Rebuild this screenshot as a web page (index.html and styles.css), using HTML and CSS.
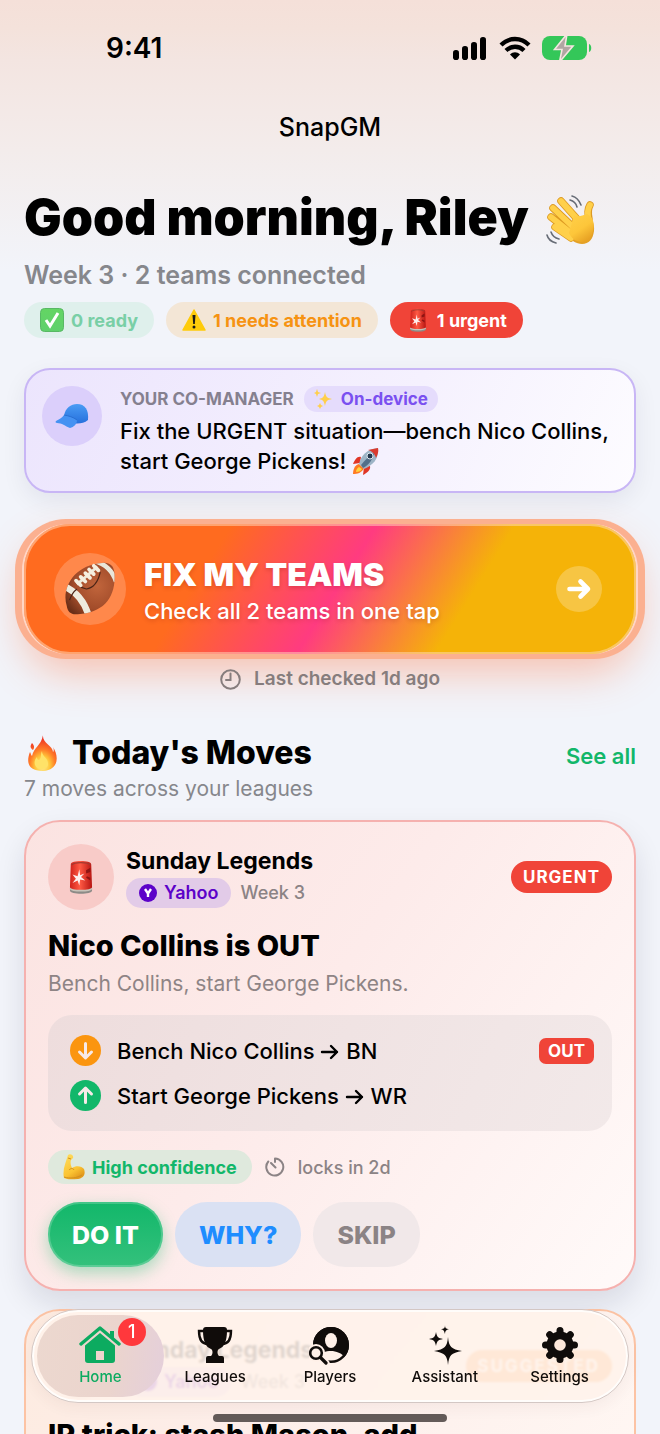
FILE: index.html
```html
<!DOCTYPE html>
<html lang="en">
<head>
<meta charset="utf-8">
<meta name="viewport" content="width=device-width, initial-scale=1">
<title>SnapGM</title>
<link rel="stylesheet" href="styles.css">
</head>
<body>
<svg class="defs" aria-hidden="true">
  <defs>
    <linearGradient id="gRed" x1="0" y1="0" x2="1" y2="0"><stop offset="0" stop-color="#d0221b"/><stop offset=".45" stop-color="#ff5a44"/><stop offset="1" stop-color="#b81512"/></linearGradient>
    <linearGradient id="gHand" x1="0" y1="0" x2=".6" y2="1"><stop offset="0" stop-color="#ffdf63"/><stop offset=".7" stop-color="#fbc332"/><stop offset="1" stop-color="#e39a1c"/></linearGradient>
    <linearGradient id="gPalm" x1="0" y1="0" x2=".6" y2="1"><stop offset="0" stop-color="#ffd04a"/><stop offset=".6" stop-color="#fdc63a"/><stop offset="1" stop-color="#e8a324"/></linearGradient>
    <linearGradient id="gGreen" x1="0" y1="0" x2="0" y2="1"><stop offset="0" stop-color="#63d563"/><stop offset="1" stop-color="#5fd06c"/></linearGradient>
    <linearGradient id="gCap" x1="0" y1="0" x2="0" y2="1"><stop offset="0" stop-color="#4a9cf5"/><stop offset="1" stop-color="#2670dc"/></linearGradient>
    <radialGradient id="gBall" cx=".62" cy=".45" r=".6"><stop offset="0" stop-color="#c1653c"/><stop offset=".65" stop-color="#a24c2a"/><stop offset="1" stop-color="#6b2f18"/></radialGradient>
    <radialGradient id="gFire" cx=".5" cy=".85" r=".75"><stop offset="0" stop-color="#fff3a0"/><stop offset=".35" stop-color="#ffc63a"/><stop offset=".6" stop-color="#ff7d27"/><stop offset="1" stop-color="#ee3424"/></radialGradient>
    <clipPath id="ballClip"><path d="M7 50C1 31 15 6 45 4c8-1 12 3 13 9 3 27-11 45-39 46C12 60 8 57 7 50z"/></clipPath>
    <symbol id="siren" viewBox="0 0 32 40">
      <path d="M3 33h26v3c0 5-26 5-26 0z" fill="#8d8b87"/><path d="M3 32h26v2c0 4-26 4-26 0z" fill="#c9c3ba"/>
      <path d="M4 5C4 0 28 0 28 5l1 27c0 4-26 4-26 0z" fill="url(#gRed)"/>
      <path d="M5 6c3-4 19-4 22 0" fill="none" stroke="#a33a30" stroke-width="1.5"/>
      <path d="M22 12l5-3v5l-5 2zM23 19l4 2v3l-5-3z" fill="#8d1513"/>
      <path d="M14 11l1 7 5-2-4 4 5 4-6-1-1 7-2-6-6 3 4-5-4-5 6 2z" fill="#fff" opacity=".92"/>
    </symbol>
  </defs>
</svg>
<div class="app">
  <header class="status">
    <span class="status-time">9:41</span>
    <span class="status-icons">
      <svg width="36" height="24" viewBox="0 0 36 24"><rect x="1" y="14" width="6" height="10" rx="2.800"/><rect x="10" y="10" width="6" height="14" rx="2.800"/><rect x="19" y="6" width="6" height="18" rx="2.800"/><rect x="28" y="1" width="6" height="23" rx="2.800"/></svg>
      <svg width="32" height="24" viewBox="0 0 32 24"><g fill="none" stroke="#000" stroke-width="4.300"><path d="M2 9C10 1 22 1 30 9"/><path d="M7 14.500C12 9.500 20 9.500 25 14.500"/></g><path d="M16 23.500l-5-5c3-3 7-3 10 0z"/></svg>
      <svg width="50" height="24" viewBox="0 0 50 24"><rect width="45" height="24" rx="8" fill="#34c759"/><path d="M47 8c3 1 3 7 0 8z" fill="#34c759"/><path d="M25-2L12.500 13.500h7.500L17.500 26 31 10h-8z" fill="#b1a6a3" stroke="#f5e6e1" stroke-width="1.600"/></svg>
    </span>
  </header>
  <div class="navbar">SnapGM</div>

  <main class="content">
    <section class="greeting">
      <h1>Good morning, Riley
        <svg class="wave" width="54" height="54" viewBox="0 0 54 54" role="img" aria-label="waving hand"><g fill="none" stroke="#676c76" stroke-width="1.600" stroke-linecap="round"><path d="M29 3c4 1 7 4 9 9M27 7c4 1 6 3 7 7M8 39c1 3 4 6 8 7M4 42c1 4 5 7 9 8"/></g><g stroke-linecap="round" stroke-linejoin="round" fill="none"><g stroke="#dd9a22" stroke-width="7.500"><path d="M18 8l17 19M10 15l20 19M8 24l20 16M12 34l16 11M47 12c-3 5-2 9-1 14"/></g><path d="M30 24c6 2 10-1 13-2 5 2 9 8 8 16-1 8-5 13-12 13-6 0-11-4-15-9z" fill="#e4a125"/><g stroke="#ffd04a" stroke-width="5.800"><path d="M18 8l17 19M10 15l20 19M8 24l20 16M12 34l16 11M47 12c-3 5-3 9-1 15"/></g><path d="M31 22c5 3 8 0 13-1 6 3 8 9 6 17-2 8-5 11-11 11-6 0-11-4-13-9z" fill="url(#gPalm)"/></g></svg>
      </h1>
      <p class="summary">Week 3 · 2 teams connected</p>
      <div class="chips">
        <span class="chip chip-ready"><svg width="24" height="24" viewBox="0 0 24 24"><rect x=".5" y=".5" width="23" height="23" rx="4" fill="url(#gGreen)" stroke="#58b864"/><path d="M6 12l4 6 8-13" fill="none" stroke="#fff" stroke-width="3"/></svg>0 ready</span>
        <span class="chip chip-warn"><svg width="24" height="24" viewBox="0 0 24 24"><path d="M12 2L23 22H1z" fill="#fecb0a" stroke="#fecb0a" stroke-width="1.500" stroke-linejoin="round"/><path d="M10.500 7h3l-.7 9h-1.600z" fill="#1b1a17"/><circle cx="12" cy="19" r="1.500" fill="#1b1a17"/></svg>1 needs attention</span>
        <span class="chip chip-urgent"><svg width="24" height="24"><use href="#siren"/></svg>1 urgent</span>
      </div>
    </section>

    <section class="manager">
      <span class="manager-avatar"><svg width="34" height="24" viewBox="0 0 34 24"><path d="M9 12C10 4 16 0 22 0c8 0 12 6 11 16-5 4-10 4-17 3z" fill="url(#gCap)"/><path d="M9 11C7 14 4 15 1 17c-1 1 0 2 1 2 5 0 8 3 13 5 4-1 7-4 7-8-4-3-8-4-13-5z" fill="#4592f2"/><path d="M9 11c5 1 9 2 13 5" fill="none" stroke="#2468cb" stroke-width=".8"/></svg></span>
      <div class="manager-body">
        <div class="manager-head"><h2>YOUR CO-MANAGER</h2><span class="device"><svg width="20" height="20" viewBox="0 0 20 20" fill="#ffcf4b"><path d="M11 3c1 5 2 6 7 7-5 1-6 2-7 7-1-5-2-6-6-7 4-1 5-2 6-7zM3 0l1 3 3 1-3 1-1 3-1-3-2-1 2-1zM6 14l1 2 2 1-2 1-1 2-1-2-2-1 2-1z"/></svg>On-device</span></div>
        <p>Fix the URGENT situation—bench Nico Collins, start George Pickens! <svg class="rocket" width="28" height="28" viewBox="0 0 28 28" role="img" aria-label="rocket"><path d="M9 10C5 9 3 13 1 17l7-1zM18 19c1 4-3 7-7 9l1-8z" fill="#e03526"/><path d="M7 17c-4 1-6 5-6 10 4 0 9-1 11-6z" fill="#ff7a22"/><path d="M7 20c-2 1-3 3-3 5 3 0 5-1 6-3z" fill="#ffd43d"/><path d="M7 17C9 9 14 2 26 1c1 11-5 17-14 21z" fill="#9db4c6"/><path d="M21 2l5-1c1 4-1 8-2 10-1-4-4-7-8-8z" fill="#da3a2e"/><path d="M9 18C13 13 17 9 22 6c-1 6-5 12-11 15z" fill="#536f89"/><circle cx="18" cy="9" r="3" fill="#24374d" stroke="#dce7ef"/></svg></p>
      </div>
    </section>

    <button class="fix" type="button">
      <span class="fix-ball"><svg width="54" height="54" viewBox="4 3 56 58"><g clip-path="url(#ballClip)"><rect width="64" height="64" fill="url(#gBall)"/><path d="M2 28c13 5 24 16 29 34" fill="none" stroke="#eeebdd" stroke-width="7"/><path d="M37 2c11 3 19 10 23 22" fill="none" stroke="#e9e7da" stroke-width="5"/></g><path d="M10 44c2-6 4-9 8-12M22 30l6 2c8-1 13-9 15-18" fill="none" stroke="#4b2417" stroke-width="1.300"/><path d="M18 27L40 8" stroke="#eee9da" stroke-width="3"/><path d="M17 23l5 5M22 19l5 5M27 15l5 5M31 11l5 5M36 7l5 5" stroke="#f5efdf" stroke-width="4" stroke-linecap="round"/></svg></span>
      <span class="fix-text"><strong>FIX MY TEAMS</strong><span>Check all 2 teams in one tap</span></span>
      <span class="fix-go"><svg width="26" height="24" viewBox="0 0 26 24"><path d="M3.500 12h18M14.500 4.500L22 12l-7.500 7.500" fill="none" stroke="#fff" stroke-width="4.600" stroke-linecap="round" stroke-linejoin="round"/></svg></span>
    </button>
    <p class="checked"><svg width="21" height="21" viewBox="0 0 21 21"><g fill="none" stroke="currentColor" stroke-width="2" stroke-linecap="round"><circle cx="10.500" cy="10.500" r="9.300"/><path d="M10.500 4.500v6.500H6"/></g></svg>Last checked 1d ago</p>

    <section class="moves">
      <div class="moves-head">
        <h2><svg width="36" height="36" viewBox="0 0 36 36" role="img" aria-label="fire"><path d="M19 0c-1 8 10 11 10 17 1-1 1-3 0-5 6 9 6 23-10 24C4 36 2 27 6 17c1 2 1 3 2 4C10 12 17 11 19 0zM8 8c2 2 3 4 1 7-3-2-3-4-1-7z" fill="url(#gFire)"/><path d="M18 16c0 6 7 7 6 14-1 5-11 6-13 0-1-3 0-6 2-8 0 2 1 3 2 3 3-2 1-5 3-9z" fill="#ffe268"/></svg>Today's Moves</h2>
        <a href="#all">See all</a>
      </div>
      <p class="moves-sub">7 moves across your leagues</p>

      <article class="card card-urgent">
        <div class="card-head">
          <span class="card-icon"><svg width="32" height="34"><use href="#siren"/></svg></span>
          <div class="card-league"><h3>Sunday Legends</h3>
            <div class="card-meta"><span class="yahoo"><svg width="18" height="18" viewBox="0 0 18 18"><circle cx="9" cy="9" r="9" fill="#5c02c9"/><path d="M6 5l3 4.500L12 5M9 9v4" fill="none" stroke="#fff" stroke-width="2.400"/></svg>Yahoo</span><span>Week 3</span></div></div>
          <span class="tag tag-urgent">URGENT</span>
        </div>
        <h2 class="card-title">Nico Collins is OUT</h2>
        <p class="card-sub">Bench Collins, start George Pickens.</p>
        <ul class="swap">
          <li><svg width="31" height="31" viewBox="0 0 31 31"><circle cx="15.500" cy="15.500" r="15.500" fill="#fb950f"/><path d="M15.500 8.500v14M9.500 17l6 6 6-6" class="swap-arrow"/></svg><span>Bench Nico Collins <svg class="to" width="20" height="16" viewBox="0 0 20 16" role="img" aria-label="to"><path d="M2 8h15M11 2l6 6-6 6"/></svg> BN</span><b>OUT</b></li>
          <li><svg width="31" height="31" viewBox="0 0 31 31"><circle cx="15.500" cy="15.500" r="15.500" fill="#12b76a"/><path d="M15.500 22.500v-14M9.500 14l6-6 6 6" class="swap-arrow"/></svg><span>Start George Pickens <svg class="to" width="20" height="16" viewBox="0 0 20 16" role="img" aria-label="to"><path d="M2 8h15M11 2l6 6-6 6"/></svg> WR</span></li>
        </ul>
        <div class="facts">
          <span class="confidence"><svg width="22" height="26" viewBox="0 0 22 26"><path d="M5 1c2-2 6 0 5 3L8 6c-1 3 0 6 1 8 4-3 10-2 12 1 2 6-1 9-6 10-5 0-10 1-14-1C-1 16 3 8 5 1z" fill="url(#gHand)"/><path d="M6 16c2-2 4-2 5 0M5 4l3 1M1 23c6 2 13 1 18-2" fill="none" stroke="#d08f20" stroke-width="1"/></svg>High confidence</span>
          <span class="locks"><svg width="20" height="20" viewBox="0 0 20 20"><path d="M10 1.500V5M10 1.500A8.500 8.500 0 1 1 3.300 4.500M6 6l4.500 4.500" fill="none" stroke="currentColor" stroke-width="2" stroke-linecap="round"/></svg>locks in 2d</span>
        </div>
        <div class="actions"><button type="button" class="do">DO IT</button><button type="button" class="why">WHY?</button><button type="button" class="skip">SKIP</button></div>
      </article>

      <article class="card card-suggested">
        <div class="card-head">
          <span class="card-icon"></span>
          <div class="card-league"><h3>Sunday Legends</h3>
            <div class="card-meta"><span class="yahoo"><svg width="18" height="18" viewBox="0 0 18 18"><circle cx="9" cy="9" r="9" fill="#5c02c9"/></svg>Yahoo</span><span>Week 3</span></div></div>
          <span class="tag tag-suggested">SUGGESTED</span>
        </div>
        <h2 class="card-title">IR trick: stash Mason, add</h2>
      </article>
    </section>
  </main>

  <footer class="dock">
    <nav class="tabs">
      <a class="tab tab-active" href="#home"><svg width="42" height="40" viewBox="0 0 42 40"><path d="M2 19L21 3l19 16" fill="none" stroke="#0cab60" stroke-width="3.400" stroke-linecap="round" stroke-linejoin="round"/><path d="M31 6h4v8l-4-3z" fill="#0cab60"/><path d="M21 8L6 20.500V35q0 3 3 3h8V26h8v12h8q3 0 3-3V20.500z" fill="#0cab60"/><path d="M16 35h10v3H16z" fill="#0cab60"/></svg>Home<span class="badge">1</span></a>
      <a class="tab" href="#leagues"><svg width="42" height="40" viewBox="0 0 42 40"><path d="M10 6H5c0 8 3 13 9 13h1M32 6h5c0 8-3 13-9 13h-1" fill="none" stroke="#100c0a" stroke-width="2.400"/><path d="M12 2h18q3 0 3 3c0 12-3 17-8 19-2 1-2 5 0 7h3q2 0 2 2v5H12v-5q0-2 2-2h3c2-2 2-6 0-7-5-2-8-7-8-19q0-3 3-3z"/></svg>Leagues</a>
      <a class="tab" href="#players"><svg width="42" height="40" viewBox="0 0 42 40"><circle cx="22" cy="20" r="18"/><ellipse cx="22" cy="15.500" rx="6" ry="7.500" fill="#fff0e8"/><path d="M9 34c2-7 8-8 13-8s11 2 14 7c-6 5-10 5-14 5-6 0-10-1-13-4z" fill="#fff0e8"/><circle cx="22" cy="20" r="16.800" fill="none" stroke="#100c0a" stroke-width="2.400"/><circle cx="7" cy="28" r="9" fill="#fff0e8"/><path d="M11 32l6 6" stroke="#fff0e8" stroke-width="7" stroke-linecap="round"/><circle cx="7" cy="28" r="5.800" fill="none" stroke="#100c0a" stroke-width="2.600"/><path d="M11.500 32.500L17 38" stroke="#100c0a" stroke-width="3.200" stroke-linecap="round"/></svg>Players</a>
      <a class="tab" href="#assistant"><svg width="42" height="40" viewBox="0 0 42 40"><path d="M24 12c1 10 3 12 14 14-11 2-13 4-14 14-1-10-3-12-14-14 11-2 13-4 14-14zM12 7c1 5 2 6 7 7-5 1-6 2-7 7-1-5-2-6-7-7 5-1 6-2 7-7zM21 0c0 3 1 4 4 4-3 1-4 2-4 5-1-3-1-4-4-5 3 0 4-1 4-4z"/></svg>Assistant</a>
      <a class="tab" href="#settings"><svg width="42" height="40" viewBox="0 0 42 40"><g transform="translate(21 20)"><g stroke="#100c0a" stroke-width="7" stroke-linecap="round"><path d="M0-14.500v29M-14.500 0h29M-10.300-10.300l20.600 20.600M10.300-10.300l-20.600 20.600"/></g><circle r="13.500"/><circle r="5.800" fill="#fee8da"/></g></svg>Settings</a>
    </nav>
    <div class="home-bar"></div>
  </footer>
</div>
</body>
</html>
```
FILE: styles.css
```css
* { box-sizing: border-box; }
body, h1, h2, h3, p, ul { margin: 0; padding: 0; }
body { font-family: Inter, "Liberation Sans", sans-serif; color: #000; }
svg { flex: none; display: block; }
button { border: 0; font-family: inherit; cursor: pointer; }
a { text-decoration: none; }
.defs { position: absolute; width: 0; height: 0; }

.app { position: relative; height: 100vh; overflow: hidden; background: linear-gradient(#f5e0d9 0, #f4e2db 28px, #f3e5e1 60px, #f3eceb 150px, #f2f4fa 270px, #f2f4fa 100%); }

.status { display: flex; justify-content: space-between; align-items: center; height: 96px; padding: 0 68px 0 106px; }
.status-time { font-size: 28px; font-weight: 600; }
.status-icons { display: flex; align-items: center; gap: 11px; }
.navbar { text-align: center; font-size: 25px; font-weight: 500; line-height: 32px; padding-top: 15px; }

.content { padding: 40px 24px 0; }
h1 { display: flex; align-items: center; gap: 14px; font-size: 50px; line-height: 68px; font-weight: 900; white-space: nowrap; }
.wave { margin-top: 6px; }
.summary { font-size: 25px; line-height: 32px; font-weight: 600; color: #86878c; margin-top: 8px; }
.chips { display: flex; gap: 12px; margin-top: 11px; }
.chip { display: flex; align-items: center; gap: 7px; height: 36px; padding: 0 16px; border-radius: 18px; font-size: 18px; font-weight: 700; white-space: nowrap; }
.chip-ready { background: #dff0ec; color: #79cfa6; }
.chip-warn { background: #f3e6d6; color: #f69312; }
.chip-urgent { background: #f04438; color: #fff; }

.manager { display: flex; gap: 18px; margin-top: 30px; padding: 16px 16px 15px; border: 2px solid #c8b6f5; border-radius: 26px; background: linear-gradient(115deg, #ece5fd, #f5f1fe 60%, #fdfcff); box-shadow: 0 8px 24px rgba(20, 20, 50, .07); }
.manager-avatar { display: flex; flex: none; align-items: center; justify-content: center; width: 60px; height: 60px; border-radius: 50%; background: #dbcffb; }
.manager-head { display: flex; align-items: center; gap: 10px; height: 26px; margin-bottom: 4px; }
.manager-head h2 { font-size: 17px; font-weight: 700; color: #85808f; }
.device { display: flex; align-items: center; gap: 7px; height: 26px; padding: 0 10px; border-radius: 13px; background: #e5dcfc; color: #7a50f0; font-size: 17px; font-weight: 700; }
.manager p { font-size: 22px; line-height: 30px; font-weight: 500; }
.rocket { display: inline-block; vertical-align: -6px; }

.fix { display: flex; align-items: center; width: 100%; height: 130px; margin-top: 31px; padding: 0 34px 0 30px; border-radius: 46px; text-align: left; color: #fff; background: linear-gradient(122deg, #ff6b1f 30%, #ff3b80 51%, #f5b308 71%); box-shadow: inset 0 0 0 2px rgba(255, 220, 190, .5), 2px 0 0 0 #ffd6c6, -2px 0 0 0 #ffd6c6, 4px 0 0 5px #fbb090, -4px 0 0 5px #fbb090, 0 18px 42px rgba(255, 107, 53, .38); }
.fix-ball { display: flex; flex: none; align-items: center; justify-content: center; width: 72px; height: 72px; border-radius: 50%; background: rgba(255, 255, 255, .2); }
.fix-text { display: flex; flex: 1; flex-direction: column; margin-left: 18px; padding-top: 3px; text-shadow: 0 2px 4px rgba(100, 0, 0, .2); }
.fix-text strong { font-size: 32px; line-height: 40px; font-weight: 900; }
.fix-text span { font-size: 22px; line-height: 32px; font-weight: 500; }
.fix-go { display: flex; flex: none; align-items: center; justify-content: center; width: 46px; height: 46px; border-radius: 50%; background: rgba(255, 255, 255, .24); }
.checked { display: flex; align-items: center; justify-content: center; gap: 13px; margin-top: 12px; font-size: 19px; line-height: 26px; font-weight: 600; color: #867d7d; }

.moves-head { display: flex; align-items: center; justify-content: space-between; margin-top: 41px; height: 40px; }
.moves-head h2 { display: flex; align-items: center; gap: 12px; font-size: 32px; line-height: 40px; font-weight: 800; }
.moves-head a { color: #12b76a; font-size: 22px; font-weight: 600; padding-top: 6px; }
.moves-sub { font-size: 21px; line-height: 28px; color: #86878c; margin-top: 2px; }

.card { border: 2px solid #f5b1af; border-radius: 36px; padding: 22px; }
.card-urgent { margin-top: 17px; background: linear-gradient(125deg, #fbe3e1, #fdebea 45%, #fffaf9); box-shadow: 0 14px 30px rgba(20, 20, 50, .11); }
.card-head { display: flex; align-items: center; gap: 12px; }
.card-icon { display: flex; flex: none; align-items: center; justify-content: center; width: 66px; height: 66px; border-radius: 50%; background: #f8cbc8; }
.card-league { flex: 1; }
.card-league h3 { font-size: 23px; line-height: 30px; font-weight: 700; }
.card-meta { display: flex; align-items: center; gap: 9px; font-size: 18px; font-weight: 500; line-height: 30px; color: #8b8385; margin-top: 2px; }
.yahoo { display: flex; align-items: center; gap: 7px; padding: 0 13px; border-radius: 15px; background: #e2cbe8; color: #5c02c9; font-weight: 600; }
.tag { padding: 0 12px; border-radius: 16px; font-size: 17px; line-height: 32px; font-weight: 700; letter-spacing: 1px; color: #fff; }
.tag-urgent { background: #f04438; }
.card-title { font-size: 29px; line-height: 36px; font-weight: 800; margin-top: 18px; white-space: nowrap; }
.card-sub { font-size: 21px; line-height: 28px; color: #8e8485; margin-top: 6px; }
.swap { display: grid; gap: 14px; margin-top: 17px; padding: 20px 18px 20px 22px; border-radius: 24px; list-style: none; background: linear-gradient(115deg, #eedddd, #f2e9e9); }
.swap li { display: flex; align-items: center; gap: 16px; height: 31px; font-size: 22px; font-weight: 500; }
.swap li span { flex: 1; }
.swap-arrow { fill: none; stroke: #f7eae8; stroke-width: 3; stroke-linecap: round; stroke-linejoin: round; }
.to { display: inline-block; vertical-align: -1px; fill: none; stroke: #000; stroke-width: 2.4px; stroke-linecap: round; stroke-linejoin: round; }
.swap b { padding: 0 9px; border-radius: 7px; background: #f04438; color: #fff; font-size: 17px; line-height: 26px; font-weight: 700; }
.facts { display: flex; align-items: center; gap: 13px; margin-top: 19px; }
.confidence, .locks { display: flex; align-items: center; height: 34px; font-size: 18px; }
.confidence { gap: 7px; padding: 0 15px; border-radius: 17px; background: #dfe9dd; color: #12b76a; font-weight: 700; }
.locks { gap: 13px; color: #8b8385; font-weight: 500; }
.actions { display: flex; gap: 12px; margin-top: 18px; }
.actions button { height: 65px; padding: 0 24px; border-radius: 32px; font-size: 25px; font-weight: 800; }
.actions .do { color: #fff; background: linear-gradient(#12b76a, #34c17c); box-shadow: inset 0 0 0 2px rgba(255, 255, 255, .2), 0 6px 16px rgba(18, 183, 106, .35); }
.actions .why { background: #dae1f3; color: #1e8dff; }
.actions .skip { background: #f1e8e9; color: #8b8385; }

.card-suggested { margin-top: 18px; border-color: #fcc3a4; background: linear-gradient(125deg, #fdebe0, #fdeeea 45%, #fff7f3); }
.card-suggested .card-icon { background: #f3d6c6; }
.tag-suggested { background: #fb9a48; letter-spacing: 2px; }

.dock { position: absolute; left: 0; right: 0; bottom: 0; padding: 0 31px 12px; }
.tabs { display: flex; height: 94px; padding: 5px 11px; border: 1px solid #d3c7c4; border-radius: 47px; background: rgba(255, 242, 235, .88); backdrop-filter: blur(1px); box-shadow: inset 0 0 0 2px rgba(255, 255, 255, .8), 0 4px 16px rgba(80, 50, 50, .06); }
.tab { position: relative; z-index: 0; flex: 1; display: flex; flex-direction: column; align-items: center; padding-top: 10px; color: #100c0a; fill: #100c0a; font-size: 15px; line-height: 22px; font-weight: 500; }
.tab svg { margin-bottom: 1px; }
.tab-active { color: #0cab60; }
.tab-active::before { content: ""; position: absolute; z-index: -1; inset: 0 -6px; border-radius: 41px; background: linear-gradient(100deg, #ecd8cf, #ebd4cd 60%, #e4cfdb); }
.badge { position: absolute; top: 3px; right: 12px; width: 28px; height: 28px; border-radius: 50%; background: #ff383c; color: #fff; font-size: 18px; line-height: 28px; text-align: center; }
.home-bar { width: 39%; height: 8px; margin: 11px auto 0; border-radius: 4px; background: #645b59; }
```
